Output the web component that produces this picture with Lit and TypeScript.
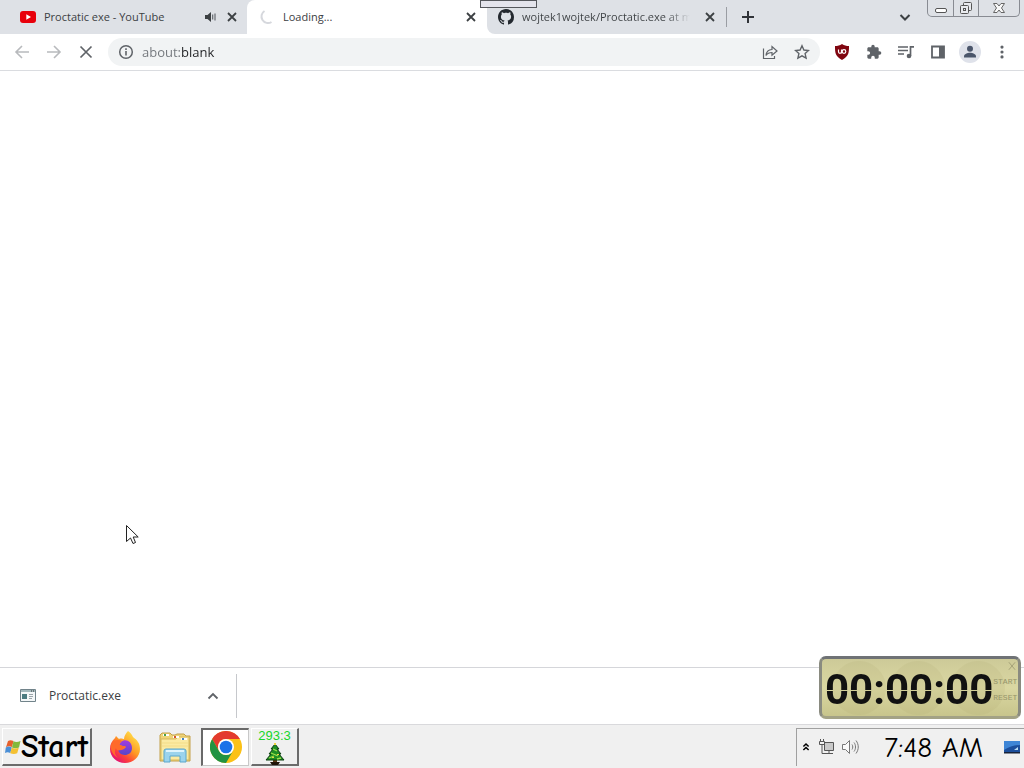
import { LitElement, html, css, svg } from "lit";
import { customElement } from "lit/decorators.js";

const cross = html`<svg viewBox="0 0 16 16" width="16" height="16"><path d="M4 4l8 8M12 4l-8 8" stroke="#3c4043" stroke-width="1.8" fill="none"/></svg>`;

const youtube = html`<svg viewBox="0 0 16 16" width="16" height="16"><rect y="2" width="16" height="12" rx="3" fill="#e8000b"/><path d="M6.3 5.3v5.4L11 8z" fill="#fff"/></svg>`;

const spinner = html`<svg viewBox="0 0 16 16" width="16" height="16"><path d="M5.500 2A6.500 6.500 0 1 0 12.500 13" stroke="#d6d8dd" stroke-width="2" fill="none"/></svg>`;

const github = html`<svg viewBox="0 0 16 16" width="16" height="16"><path fill="#24292f" d="M8 0C3.58 0 0 3.58 0 8c0 3.54 2.29 6.53 5.47 7.59.4.07.55-.17.55-.38 0-.19-.01-.82-.01-1.49-2.01.37-2.53-.49-2.69-.94-.09-.23-.48-.94-.82-1.13-.28-.15-.68-.52-.01-.53.63-.01 1.08.58 1.23.82.72 1.21 1.87.87 2.33.66.07-.52.28-.87.51-1.07-1.78-.2-3.64-.89-3.64-3.95 0-.87.31-1.59.82-2.15-.08-.2-.36-1.02.08-2.12 0 0 .67-.21 2.2.82.64-.18 1.32-.27 2-.27s1.36.09 2 .27c1.53-1.04 2.2-.82 2.2-.82.44 1.1.16 1.92.08 2.12.51.56.82 1.27.82 2.15 0 3.07-1.87 3.75-3.65 3.95.29.25.54.73.54 1.48 0 1.07-.01 1.93-.01 2.2 0 .21.15.46.55.38A8.01 8.01 0 0 0 16 8c0-4.42-3.58-8-8-8z"/></svg>`;

const sound = html`<svg class="sound" viewBox="0 0 14 16" width="14" height="16"><path d="M2 6h2.500l3.500-3v10L4.500 10H2z" fill="#3c4043"/><path d="M9.700 5.500v5M12 4.500v7" stroke="#5c6065" stroke-width="1.100"/></svg>`;

const line = (d: string, color = "#5f6368", size = 16, width = 1.6) =>
  html`<svg viewBox="0 0 16 16" width=${size} height=${size}><path d=${d} stroke=${color} stroke-width=${width} fill="none"/></svg>`;

const solid = (d: string, color = "#5f6368", size = 16) =>
  html`<svg viewBox="0 0 24 24" width=${size} height=${size}><path d=${d} fill=${color}/></svg>`;

const info = html`<svg viewBox="0 0 16 16" width="16" height="16"><circle cx="8" cy="8" r="6.300" fill="none" stroke="#5f6368" stroke-width="1.500"/><path d="M8 7v4.500M8 4.300v1.600" stroke="#5f6368" stroke-width="1.600"/></svg>`;

const share = html`<svg viewBox="0 0 16 16" width="16" height="16" fill="none" stroke="#5f6368" stroke-width="1.200"><path d="M1.500 4.500v10h11v-2.500"/><path d="M4 11.500c.3-4 2.500-5.800 6-6V2.500L15 7l-5 4.200V8.500c-3 0-4.600.8-6 3z"/></svg>`;

const shield = html`<svg viewBox="0 0 16 16" width="16" height="16"><path d="M8 0c2.200 1.500 4.300 2 7 2 0 6.500 0 10-7 14C1 12 1 8.500 1 2c2.700 0 4.800-.5 7-2z" fill="#800610"/><path d="M4.500 5.500v2.300c0 2 3 2 3 0V5.500v4" stroke="#fff" stroke-width="1.200" fill="none"/><circle cx="10" cy="7.500" r="1.800" stroke="#fff" stroke-width="1.200" fill="none"/></svg>`;

const music = html`<svg viewBox="0 0 18 16" width="18" height="16"><path d="M1 3h10M1 6.500h10M1 10h6" stroke="#5f6368" stroke-width="1.500"/><path d="M13.500 12V2.800H17" stroke="#5f6368" stroke-width="1.700" fill="none"/><circle cx="12" cy="12" r="2.300" fill="#5f6368"/></svg>`;

const panel = html`<svg viewBox="0 0 16 16" width="16" height="16"><path d="M2 2.500h12v11H2z" fill="none" stroke="#5f6368" stroke-width="1.800"/><path d="M9 2h5v12H9z" fill="#5f6368"/></svg>`;

const person = html`<svg viewBox="0 0 22 22" width="22" height="22"><circle cx="11" cy="11" r="11" fill="#dfe2ea"/><circle cx="11" cy="7.800" r="3" fill="#4b566b"/><path d="M5 16.500v-1.300c0-2.100 3.500-3.400 6-3.400s6 1.300 6 3.400v1.300z" fill="#4b566b"/></svg>`;

const exeFile = html`<svg viewBox="0 0 16 14" width="16" height="14"><path d="M.5.5h15v12H.5z" fill="#f4f7f8" stroke="#71838a"/><path d="M1 1h14v2H1z" fill="#a3b8bc"/><path d="M2 5h5v5H2z" fill="#4b7b80"/><path d="M9 5.500h4M9 7.500h4M9 9.500h3" stroke="#9ba5aa"/><path d="M11 2h1M13 2h1" stroke="#333"/></svg>`;

const flag = html`<svg viewBox="0 0 16 18" width="16" height="18"><path d="M3 3c2-1.300 3.500-1 5.500 0L7 9c-2-1-4-1-6 .2z" fill="#e6602c"/><path d="M8.500 3.200c2 1 4 1 7-.2L14 9.500c-2.500 1-4.500 1-7 0z" fill="#82b93c"/><path d="M.8 9.500c2-1.200 3.700-1.200 6-.1l-1.500 5.600c-2-1-3.500-1-5.300 0z" fill="#4a8fd6"/><path d="M6.800 9.700c2 1 4.600 1 7 0L12.200 15.300c-2.200 1-4.500 1-7 0z" fill="#f4c132"/></svg>`;

const firefox = html`<svg viewBox="0 0 32 32" width="32" height="32">
  <defs>
    <linearGradient id="fx" x1=".85" y1=".1" x2=".2" y2=".9"><stop offset="0" stop-color="#ffe14a"/><stop offset=".45" stop-color="#ff9a24"/><stop offset=".75" stop-color="#ff4338"/><stop offset="1" stop-color="#e5156f"/></linearGradient>
    <linearGradient id="fp" x1="0" y1="0" x2="0" y2="1"><stop offset="0" stop-color="#a23be0"/><stop offset="1" stop-color="#5846c9"/></linearGradient>
  </defs>
  <path d="M19 0c3 2 4 4 5 6 4 3 7 6 7 12 0 8-7 14-15 14S1 26 1 18c0-5 2-8 5-11l1-2 3 3c2-1 4 0 5 0 0-3 2-6 4-8z" fill="url(#fx)"/>
  <path d="M12 11c4-4 11-1 11 6 0 5-4 7-7 7-4 0-7-3-7-6 2 2 4 1 6 0l2-2c-3 0-4-2-7-2z" fill="url(#fp)"/>
  <path d="M2 14c2-5 7-6 11-4-2 1-3 2-2 4 1 1 4 1 6 1-2 3-4 3-6 4-2 1-4 0-4-2-2 4-1 7 2 10-5-3-8-8-7-13z" fill="#ff6a2b"/>
</svg>`;

const explorer = html`<svg viewBox="0 0 32 32" width="32" height="32">
  <path d="M1 4l2-2h8l2 2h3l2-1h7l2 2h4v25H1z" fill="#eed478" stroke="#c3a04b"/>
  <path d="M2 8h15l2-2h11v23H2z" fill="#fbeaa2" stroke="#d8b95f"/>
  <path d="M3 12h26M3 15h26" stroke="#f3dc88"/>
  <path d="M4 4h6M14 6h6M22 8h6" stroke="#fff" stroke-width="2"/><path d="M5 4h2" stroke="#48a24c" stroke-width="2"/><path d="M15 6h2" stroke="#d25430" stroke-width="2"/><path d="M23 8h2" stroke="#4482bf" stroke-width="2"/>
  <path d="M5 31V20q0-2 2-2h18q2 0 2 2v11h-6v-6H11v6z" fill="#9bd3ed" stroke="#5aa6cc"/><path d="M7 20h18" stroke="#dff4fd" stroke-width="2"/>
</svg>`;

const chrome = html`<svg viewBox="0 0 48 48" width="32" height="32">
  <circle cx="24" cy="24" r="24" fill="#fbc116"/>
  <path d="M3.200 12A24 24 0 0 1 44.800 12L24 12A12 12 0 0 0 13.600 30z" fill="#e33b2e"/>
  <path d="M3.200 12A24 24 0 0 0 24 48L34.400 30A12 12 0 0 1 13.600 30z" fill="#229342"/>
  <circle cx="24" cy="24" r="12" fill="#fff"/><circle cx="24" cy="24" r="9.500" fill="#1a73e8"/>
</svg>`;

const tree = html`<svg viewBox="0 0 20 22" width="20" height="22">
  <path d="M8 17h4v4H8z" fill="#5a3715"/><path d="M5 19h10l-2 3H7z" fill="#201408"/>
  <path d="M10 1l4 5h-2l4 5h-2l5 6H1l5-6H4l4-5H6z" fill="#1f8e24" stroke="#0b3d0e"/>
  <path d="M8 6l4 2M6 10l7 3M4 15l5-2M12 16l4-1" stroke="#9be24a" stroke-width="1.300"/><path d="M10 0v2M8 14v1M13 11v1" stroke="#f0d340" stroke-width="2"/>
</svg>`;

const network = html`<svg viewBox="0 0 18 16" width="18" height="16" fill="none" stroke="#555"><path d="M6.500 3.500h9v8h-9z" fill="#c9c9c9"/><path d="M11 12v2M7 14.500h8M1.500 2.500h5v3h-5zM2.500 0v2M5.500 0v2M4 6v8.500h3"/></svg>`;

const volume = html`<svg viewBox="0 0 18 16" width="18" height="16" fill="none" stroke="#777"><path d="M1.500 5.500h3l4-4v13l-4-4h-3z" fill="#fafafa"/><path d="M11 5.500c1 1.500 1 3.500 0 5M13 3.500c2 2.500 2 6.500 0 9M15 1.500c3 4 3 9 0 13"/></svg>`;

const desktop = html`<svg viewBox="0 0 16 14" width="16" height="14"><path d="M0 1h16v11H0z" fill="#1c4f9c"/><path d="M0 1h16v4Q8 5 0 10z" fill="#3f86d6"/><path d="M0 12h16v1.500H0z" fill="#18233a"/><path d="M10 10l4-3v3z" fill="#b9dcf4"/></svg>`;

const lcdShade = html`<svg class="shade" viewBox="0 0 196 57" aria-hidden="true">
  ${[37, 96, 156].map((x) => svg`<circle cx=${x} cy="29" r="27" fill="#aaa668" fill-opacity=".14"/>`)}
</svg>`;

@customElement("app-root")
export class AppRoot extends LitElement {
  static styles = css`
    :host { display: block; font-family: "Open Sans", "Noto Sans", sans-serif; font-size: 11px; color: #3c4043; }
    * { box-sizing: border-box; }
    svg { display: block; flex: none; }
    button { font: inherit; color: inherit; border: 0; background: none; padding: 0; margin: 0; display: flex; align-items: center; justify-content: center; flex: none; }
    .screen { position: relative; display: flex; flex-direction: column; min-height: 100vh; background: #fff; overflow: hidden; }

    .strip { display: flex; height: 34px; background: #dee1e6; padding-left: 7px; }
    .tab { display: flex; align-items: center; flex: 0 1 240px; min-width: 0; gap: 8px; padding: 0 8px 0 12px; }
    .tab.first { padding: 0 7px 0 13px; }
    .sound { margin-right: -1px; }
    .tab.active { background: #fff; border-radius: 8px 8px 0 0; }
    .edge { background: #fff; display: flex; flex: 0 1 239px; min-width: 0; }
    .edge .tab { flex: 1; background: #dee1e6; border-bottom-left-radius: 8px; padding-left: 11px; }
    .title { flex: 1; min-width: 0; white-space: nowrap; line-height: 16px; }
    .fade { background: linear-gradient(to left, #dee1e6 4px, #3c4043 28px); -webkit-background-clip: text; background-clip: text; color: transparent; }
    .divider { width: 1px; height: 20px; background: #9a9da3; align-self: center; margin-right: 7px; }
    .new { width: 28px; }
    .search { width: 28px; margin-left: auto; margin-right: 8px; }
    .controls { display: flex; height: 17px; border: 1px solid #888b92; border-top: 0; border-radius: 0 0 5px 5px; margin-right: 4px; }
    .controls button { width: 25px; }
    .controls button + button { border-left: 1px solid #888b92; }
    .controls button:last-child { width: 41px; }
    .grip { position: absolute; left: 480px; top: 0; width: 57px; height: 8px; border: 1px solid #55575c; background: #e4e4ec; }

    .toolbar { display: flex; align-items: center; gap: 4px; height: 37px; padding: 0 8px; border-bottom: 1px solid #dadce0; }
    .toolbar button { width: 28px; height: 28px; }
    .omnibox { flex: 1; display: flex; align-items: center; gap: 4px; height: 28px; margin: 0 4px; padding: 0 4px 0 10px; border-radius: 14px; background: #f1f3f4; }
    .omnibox input { flex: 1; min-width: 0; border: 0; outline: 0; padding: 0; margin-left: 4px; font: inherit; font-size: 13px; line-height: 20px; color: transparent; background: linear-gradient(to right, #71757a 39px, #202124 39px); -webkit-background-clip: text; background-clip: text; }

    .page { flex: 1; }
    .downloads { display: flex; align-items: center; height: 57px; border-top: 1px solid #d5d6da; }
    .item { display: flex; align-items: center; width: 237px; height: 44px; padding: 0 9px 0 20px; border-right: 1px solid #c6c8cc; gap: 13px; }
    .item a { flex: 1; color: inherit; text-decoration: none; font-size: 12px; line-height: 20px; }
    .item button { width: 28px; height: 28px; }

    .taskbar { display: flex; align-items: center; height: 44px; background: #f0f0f0; border-top: 1px solid #d9d9dc; padding: 0 0 0 2px; gap: 2px; }
    .taskbar .start { width: 90px; height: 38px; margin-right: 7px; border: 1px solid #fff; border-right: 2px solid #6b6b6b; border-bottom: 2px solid #6b6b6b; padding-top: 2px; font-family: "Comic Sans MS", "Comic Neue", Lato, sans-serif; font-weight: 700; font-size: 32px; line-height: 32px; color: #000; }
    .task { width: 48px; height: 38px; }
    .taskbar .pressed { background: #fff; border: 1px solid #c8c8c8; border-top: 2px solid #696969; border-left: 2px solid #696969; }
    .taskbar .raised { flex-direction: column; border: 1px solid #fff; border-right: 2px solid #6b6b6b; border-bottom: 2px solid #6b6b6b; font-family: "Liberation Sans", sans-serif; font-size: 13px; line-height: 15px; color: #16d62a; }
    .tray { display: flex; align-items: center; height: 38px; width: 228px; margin-left: auto; padding: 0 4px 0 2px; border-top: 1px solid #a0a0a0; border-left: 1px solid #a0a0a0; gap: 5px; }
    .clock { flex: 1; text-align: right; padding: 2px 16px 0 0; font-family: "Comic Sans MS", "Comic Neue", Lato, sans-serif; font-size: 29px; line-height: 32px; color: #000; white-space: nowrap; }

    .timer { position: absolute; right: 3px; bottom: 49px; width: 202px; height: 63px; display: flex; align-items: center; padding: 0 2px 0 3px; border: 3px solid; border-color: #6f7275 #8a8b80 #a3a285 #8a8b80; border-radius: 7px; background: linear-gradient(#cdca98, #dad7a2 50%, #c8c58c); }
    .shade { position: absolute; inset: 0; width: 100%; height: 100%; }
    .time { position: relative; flex: 1; padding-top: 5px; font-family: Roboto, "Liberation Sans", sans-serif; font-weight: 700; font-size: 42px; line-height: 52px; color: transparent; background: linear-gradient(#111 31px, transparent 31px, transparent 32px, #111 32px); -webkit-background-clip: text; background-clip: text; white-space: nowrap; }
    .side { position: relative; display: flex; flex-direction: column; align-items: flex-end; font-family: "Liberation Mono", monospace; font-size: 8px; line-height: 10px; color: #96946a; gap: 6px; height: 54px; }
    .cursor { position: absolute; left: 126px; top: 525px; }
  `;

  render() {
    return html`<div class="screen">
      <header class="strip">
        <div class="tab first">${youtube}<span class="title">Proctatic exe - YouTube</span>${sound}<button aria-label="Close tab">${cross}</button></div>
        <div class="tab active">${spinner}<span class="title">Loading...</span><button aria-label="Close tab">${cross}</button></div>
        <div class="edge"><div class="tab">${github}<span class="title fade">wojtek1wojtek/Proctatic.exe at m</span><button aria-label="Close tab">${cross}</button></div></div>
        <span class="divider"></span>
        <button class="new" aria-label="New tab">${line("M8 2v12M2 8h12", "#303338", 16, 2)}</button>
        <button class="search" aria-label="Search tabs">${line("M3.500 6L8 10.500 12.500 6", "#3c4043", 16, 2)}</button>
        <div class="controls">
          <button aria-label="Minimize"><svg width="14" height="16"><rect x="1.500" y="8.500" width="11" height="4" rx="1.500" fill="#fff" stroke="#555"/></svg></button>
          <button aria-label="Restore"><svg width="14" height="16" fill="#e8eaee" stroke="#555"><rect x="4.500" y="2.500" width="8" height="8" rx="1"/><rect x="1.500" y="5.500" width="8" height="8" rx="1"/><rect x="4.500" y="8.500" width="2" height="2"/></svg></button>
          <button aria-label="Close"><svg width="14" height="16"><path d="M1.500 3.500h3.500l2 2.500 2-2.500h3.500L9.500 8l3 4.500H9L7 10l-2 2.500H1.500l3-4.500z" fill="#f8f8f8" stroke="#666"/></svg></button>
        </div>
      </header>
      <nav class="toolbar">
        <button aria-label="Back">${line("M15 8H2M8 2L2 8l6 6", "#b8babd")}</button>
        <button aria-label="Forward">${line("M1 8h13M8 2l6 6-6 6", "#b8babd")}</button>
        <button aria-label="Stop">${line("M2.500 2.500l11 11M13.500 2.500l-11 11", "#5f6368", 16, 1.7)}</button>
        <div class="omnibox">${info}<input aria-label="Address" .value=${"about:blank"}>
          <button aria-label="Share">${share}</button>
          <button aria-label="Bookmark">${line("M8 1.800l1.900 4.200 4.600.5-3.400 3.100 1 4.500L8 11.800l-4.100 2.300 1-4.500L1.500 6.500l4.600-.5z", "#5f6368", 16, 1.4)}</button>
        </div>
        <button aria-label="uBlock">${shield}</button>
        <button aria-label="Extensions">${solid("M20.500 11H19V7c0-1.100-.9-2-2-2h-4V3.500a2.500 2.500 0 0 0-5 0V5H4c-1.100 0-2 .9-2 2v3.800h1.500a2.700 2.700 0 0 1 0 5.400H2V20c0 1.100.9 2 2 2h3.800v-1.500a2.700 2.700 0 0 1 5.400 0V22H17c1.100 0 2-.9 2-2v-4h1.500a2.500 2.500 0 0 0 0-5z")}</button>
        <button aria-label="Media">${music}</button>
        <button aria-label="Side panel">${panel}</button>
        <button aria-label="Profile">${person}</button>
        <button aria-label="Menu">${solid("M12 7a2.400 2.400 0 1 0 0-4.800A2.400 2.400 0 0 0 12 7zm0 2.600a2.400 2.400 0 1 0 0 4.800 2.400 2.400 0 0 0 0-4.800zM12 17a2.400 2.400 0 1 0 0 4.800 2.400 2.400 0 0 0 0-4.800z")}</button>
      </nav>
      <main class="page"></main>
      <section class="downloads">
        <div class="item">${exeFile}<a href="#">Proctatic.exe</a><button aria-label="Download options">${line("M3.500 10.500L8 6l4.500 4.500", "#5f6368", 16, 1.8)}</button></div>
      </section>
      <footer class="taskbar">
        <button class="start">${flag}Start</button>
        <button class="task" aria-label="Firefox">${firefox}</button>
        <button class="task" aria-label="Explorer">${explorer}</button>
        <button class="task pressed" aria-label="Chrome">${chrome}</button>
        <button class="task raised">293:3${tree}</button>
        <div class="tray">
          <button aria-label="Show hidden icons">${line("M5 7.500l3-3 3 3M5 11.500l3-3 3 3", "#000", 14, 1.700)}</button>
          ${network}${volume}
          <span class="clock">7:48 AM</span>
          ${desktop}
        </div>
      </footer>
      <div class="grip"></div>
      <div class="timer">${lcdShade}
        <span class="time">00:00:00</span>
        <div class="side">
          <button aria-label="Close timer">${line("M3 2l10 12M13 2L3 14", "#a5a278", 10, 1.6)}</button>
          <button>START</button><button>RESET</button>
        </div>
      </div>
      <svg class="cursor" width="13" height="20"><path d="M.5.500v16l4-3.500 2.500 5.500 2.500-1-2.300-5.500h5z" fill="#fff" stroke="#222"/></svg>
    </div>`;
  }
}
